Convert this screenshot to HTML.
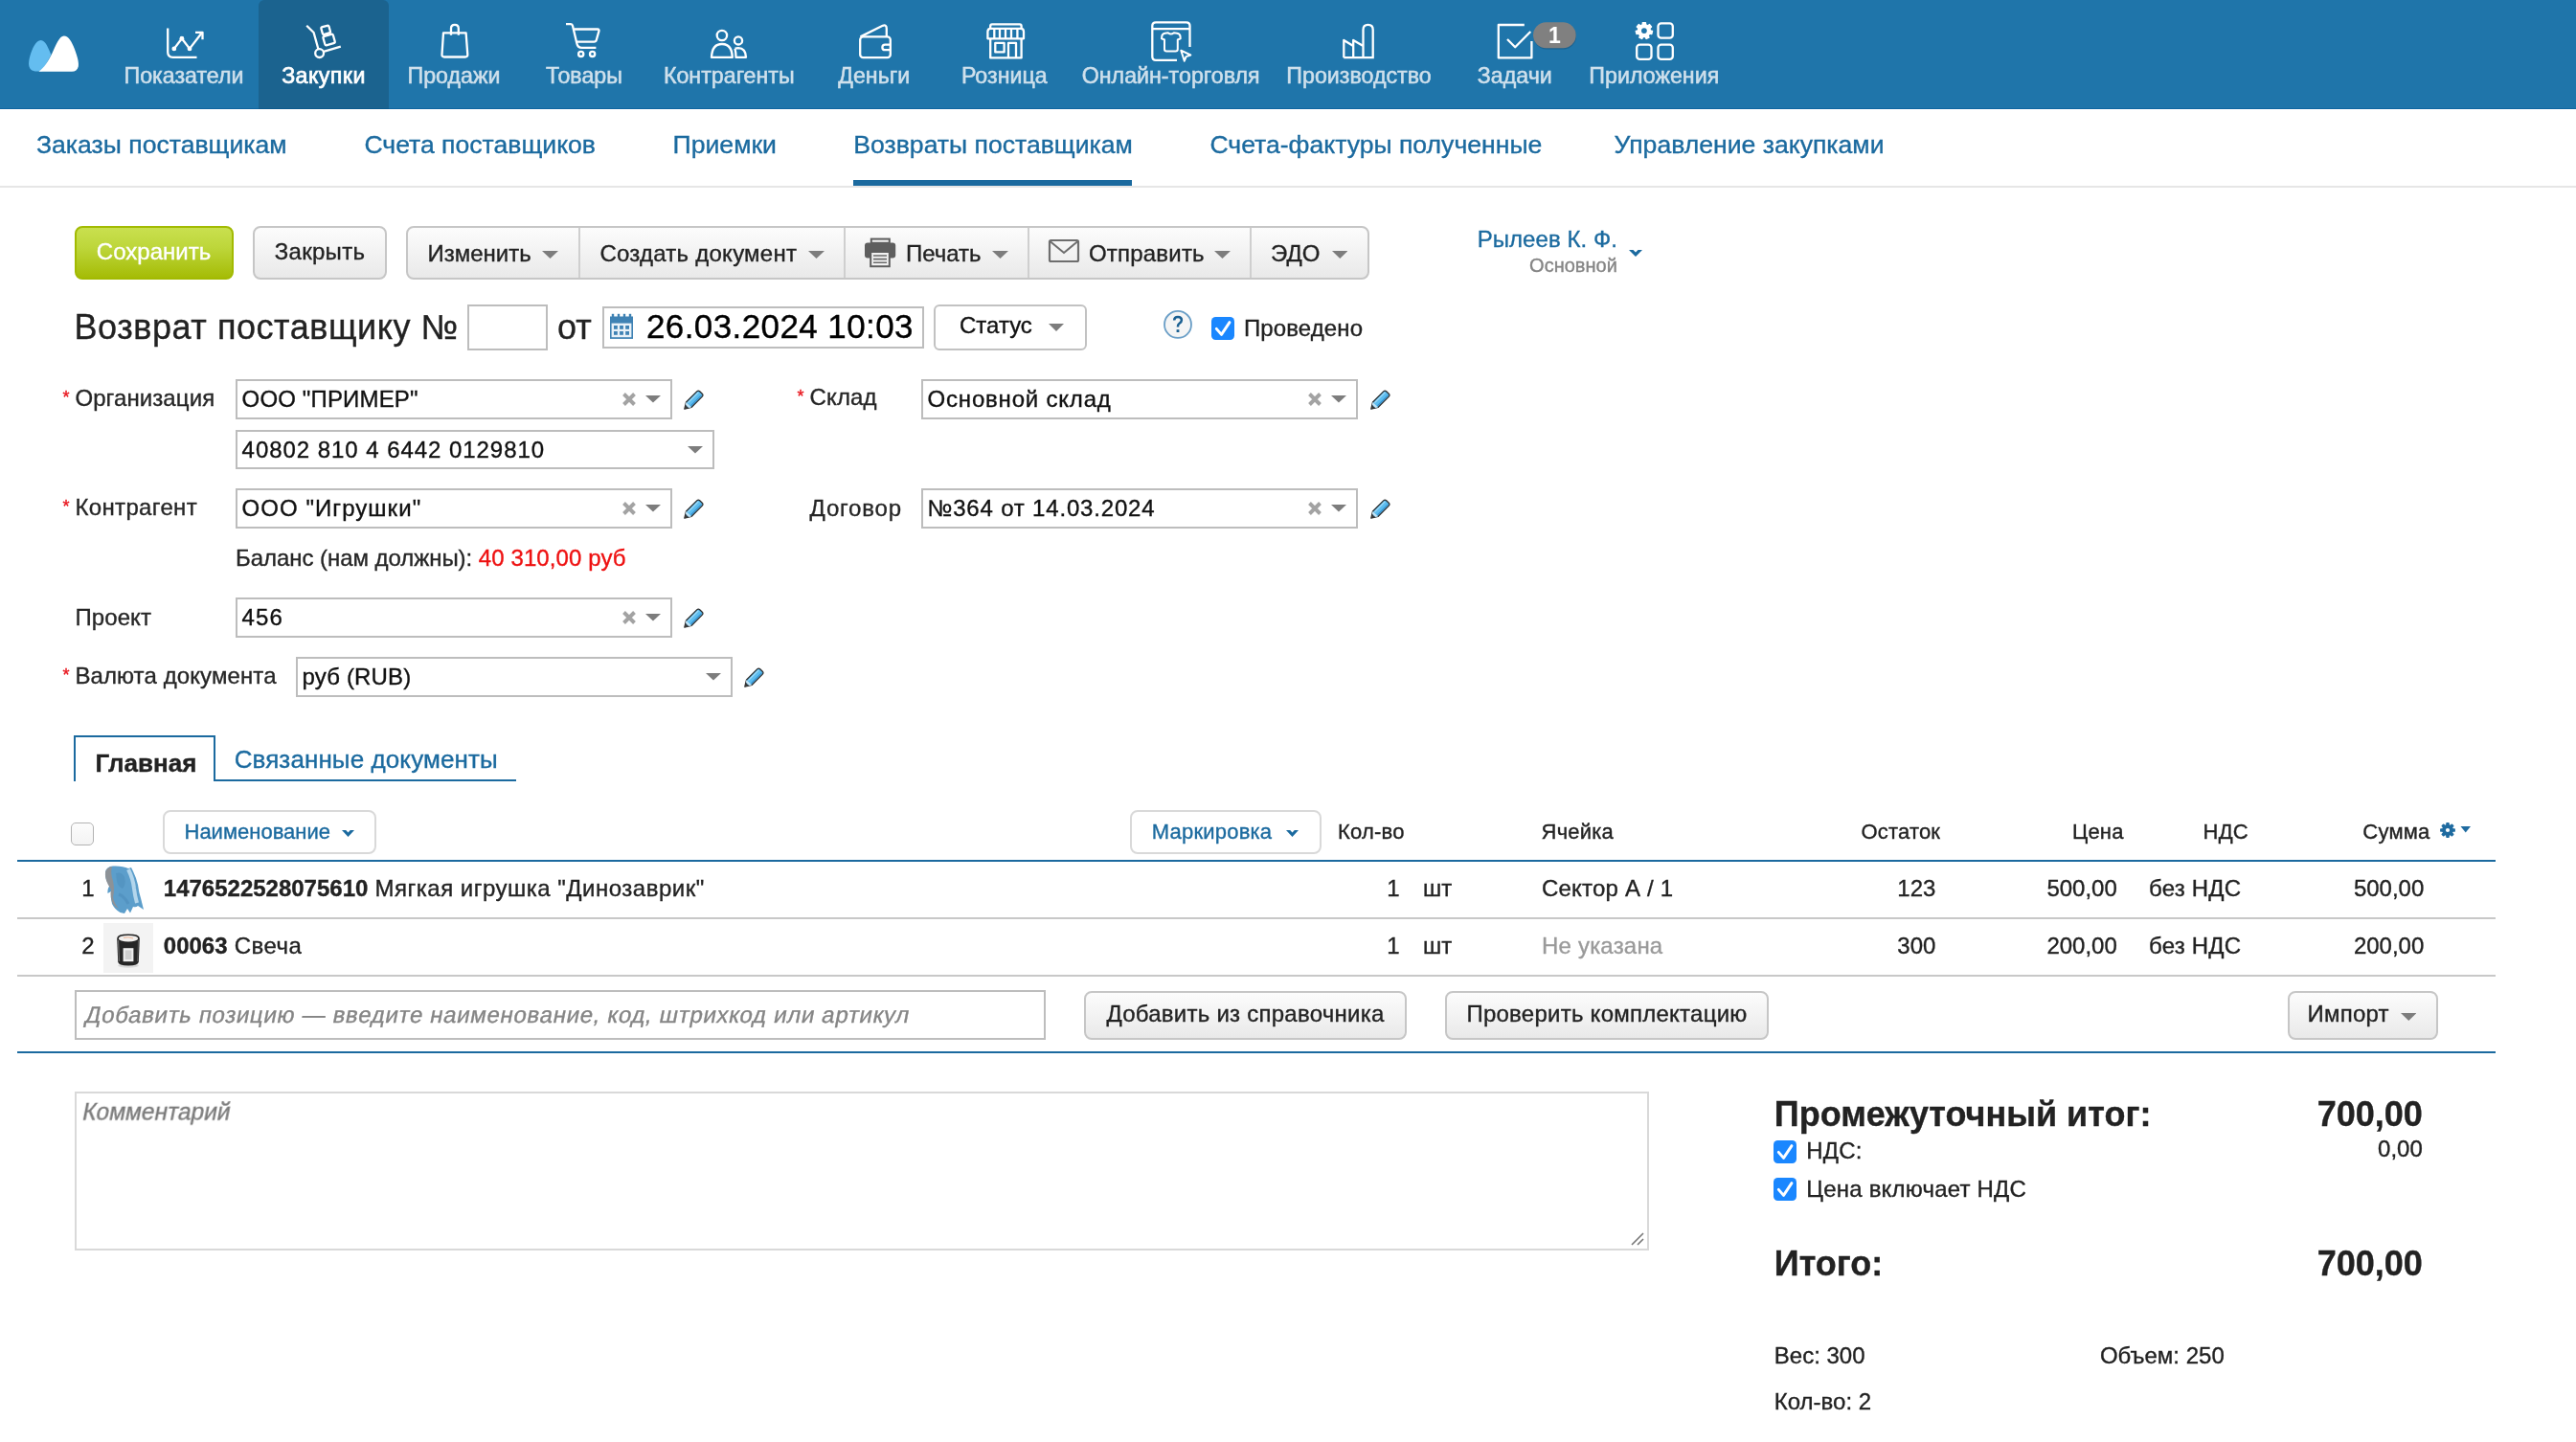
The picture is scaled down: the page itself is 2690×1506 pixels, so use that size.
<!DOCTYPE html>
<html><head><meta charset="utf-8"><style>
html,body{margin:0;padding:0;background:#fff;width:2690px;height:1506px;overflow:hidden;position:relative;}
.t{position:absolute;white-space:nowrap;font-family:"Liberation Sans", sans-serif;line-height:1;-webkit-text-stroke:0.35px currentColor;}
#w{position:absolute;left:0;top:0;width:2690px;height:1506px;will-change:transform;}
.r{position:absolute;box-sizing:border-box;}
</style></head><body>
<div id="w">
<div class="r" style="left:0px;top:0px;width:2690px;height:114px;background:#1f75aa;"></div>
<div class="r" style="left:0px;top:113px;width:2690px;height:1px;background:#0f65a0;"></div>
<div class="r" style="left:270px;top:0px;width:136px;height:114px;background:#1b638f;border-radius:6px 6px 0 0;"></div>
<div class="r" style="left:270px;top:113px;width:136px;height:1px;background:#0c5a8e;"></div>
<div class="t" style="top:68.0px;font-size:23.2px;color:#cfe0ec;letter-spacing:0.02px;left:192px;transform:translateX(-50%);-webkit-text-stroke:0.5px currentColor;">Показатели</div>
<div class="t" style="top:68.0px;font-size:23.2px;color:#ffffff;letter-spacing:0.45px;left:338px;transform:translateX(-50%);-webkit-text-stroke:0.7px #fff;">Закупки</div>
<div class="t" style="top:68.0px;font-size:23.2px;color:#cfe0ec;letter-spacing:0.02px;left:474px;transform:translateX(-50%);-webkit-text-stroke:0.5px currentColor;">Продажи</div>
<div class="t" style="top:68.0px;font-size:23.2px;color:#cfe0ec;letter-spacing:0.02px;left:610px;transform:translateX(-50%);-webkit-text-stroke:0.5px currentColor;">Товары</div>
<div class="t" style="top:68.0px;font-size:23.2px;color:#cfe0ec;letter-spacing:0.02px;left:761.3px;transform:translateX(-50%);-webkit-text-stroke:0.5px currentColor;">Контрагенты</div>
<div class="t" style="top:68.0px;font-size:23.2px;color:#cfe0ec;letter-spacing:0.02px;left:912.7px;transform:translateX(-50%);-webkit-text-stroke:0.5px currentColor;">Деньги</div>
<div class="t" style="top:68.0px;font-size:23.2px;color:#cfe0ec;letter-spacing:0.02px;left:1048.8px;transform:translateX(-50%);-webkit-text-stroke:0.5px currentColor;">Розница</div>
<div class="t" style="top:68.0px;font-size:23.2px;color:#cfe0ec;letter-spacing:0.02px;left:1222.7px;transform:translateX(-50%);-webkit-text-stroke:0.5px currentColor;">Онлайн-торговля</div>
<div class="t" style="top:68.0px;font-size:23.2px;color:#cfe0ec;letter-spacing:0.02px;left:1419px;transform:translateX(-50%);-webkit-text-stroke:0.5px currentColor;">Производство</div>
<div class="t" style="top:68.0px;font-size:23.2px;color:#cfe0ec;letter-spacing:0.02px;left:1581.8px;transform:translateX(-50%);-webkit-text-stroke:0.5px currentColor;">Задачи</div>
<div class="t" style="top:68.0px;font-size:23.2px;color:#cfe0ec;letter-spacing:0.02px;left:1727.3px;transform:translateX(-50%);-webkit-text-stroke:0.5px currentColor;">Приложения</div>
<svg class="r" style="left:0;top:0" width="2690" height="114" viewBox="0 0 2690 114">
<g fill="none" stroke="#ffffff" stroke-width="2.3" stroke-linecap="butt" stroke-linejoin="round">
<!-- logo -->
</g>
<path d="M42.7 42 C37.5 42 33.5 51 31.2 59 C29.3 66 29.6 71.5 33.5 73.4 C36 74.6 40 74.7 44 74.4 L53.4 57 C50.5 50.5 47.5 42 42.7 42 Z" fill="#64bdf0"/>
<path d="M40.5 74.7 C46.5 70.5 50.5 63.5 54.5 55.5 C58.5 47 62 37.5 66.8 37.5 C71.5 37.5 75 43.5 78 51.5 C81 59.5 82.6 65.5 81.8 69.5 C81 73 78.5 74.7 75 74.7 Z" fill="#fff"/>
<g fill="none" stroke="#ffffff" stroke-width="2.3" stroke-linejoin="round">
<!-- pokazateli -->
<path d="M175.2 29.5 V54.5 Q175.2 59.8 180.5 59.8 H205.5"/>
<path d="M181.8 50.9 L189.9 40.2 L198 50.9 L211 34"/>
<path d="M204 33.8 H211.5 V41.2"/>
</g><g fill="#fff"><circle cx="181.8" cy="50.9" r="2.4"/><circle cx="189.9" cy="40.2" r="2.4"/><circle cx="198" cy="50.9" r="2.4"/></g>
<g fill="none" stroke="#ffffff" stroke-width="2.3" stroke-linejoin="round">
<!-- zakupki -->
<path d="M320.2 26.8 L327.6 34 L332.4 51.2"/>
<circle cx="333.6" cy="55.6" r="4.4"/>
<path d="M338 53.9 L355.8 48.6"/>
<rect x="336" y="27.4" width="8.4" height="8" rx="1.6" transform="rotate(-16 340 31.4)"/>
<rect x="338.2" y="36.6" width="10.8" height="9.8" rx="1.8" transform="rotate(-16 343.6 41.5)"/>
<!-- prodazhi bag -->
<path d="M463 34.3 H486.6 L488.3 56.8 Q488.5 59.5 485.8 59.5 H464 Q461.3 59.5 461.5 56.8 Z"/>
<path d="M471 36.8 V29.8 Q471 25.9 474.9 25.9 Q478.8 25.9 478.8 29.8 V36.8"/>
<!-- tovary cart -->
<path d="M591 25.2 H596 Q597.6 25.2 598 27 L602.4 45.5 Q603.3 49.8 607.5 49.8 H622.4"/>
<path d="M599.3 30.5 H624 Q626 30.5 625.4 32.6 L622.8 41.8 Q622.3 43.7 620.3 43.7 H602.5"/>
<circle cx="606.7" cy="56.4" r="2.6"/>
<circle cx="618.6" cy="56.4" r="2.6"/>
<!-- kontragenty -->
<circle cx="753.9" cy="37" r="5.2"/>
<path d="M743 59.9 Q743.5 46 753.9 46 Q764.3 46 764.8 59.9 Z"/>
<circle cx="771" cy="42.4" r="4.1"/>
<path d="M767.5 50.8 Q769 50.2 771 50.2 Q778.6 50.4 779 59.9 H768.5 Q768.4 54 767.5 50.8"/>
<!-- dengi wallet -->
<rect x="898.2" y="38.4" width="31.6" height="21.8" rx="3.2"/>
<path d="M898.5 38.4 L921.8 26.8 Q925.8 25.4 925.8 29.8 V38"/>
<path d="M929.8 46.6 H924.2 Q921.4 46.6 921.4 49.4 Q921.4 52.2 924.2 52.2 H929.8"/>
<!-- roznica -->
<path d="M1034.2 29.8 V27.2 Q1034.2 25.4 1036 25.4 H1064.8 Q1066.6 25.4 1066.6 27.2 V29.8"/>
<path d="M1031.4 40.3 V33 Q1031.4 29.9 1034.5 29.9 H1066 Q1069 29.9 1069 33 V40.3 Z"/>
<path d="M1038.3 30 V40 M1044 30 V40 M1050 30 V40 M1056 30 V40 M1062.4 30 V40"/>
<path d="M1034.2 40.4 V60.4 H1066.6 V40.4"/>
<rect x="1039.3" y="44.9" width="9.3" height="9.5"/>
<path d="M1053 60.4 V44.9 H1061 V60.4"/>
<!-- online -->
<path d="M1229 62.8 H1207 Q1203.3 62.8 1203.3 59 V27 Q1203.3 23.3 1207 23.3 H1238.8 Q1242.5 23.3 1242.5 27 V49"/>
<path d="M1203.3 30.2 H1242.5"/>
<path d="M1213.3 37.8 Q1213.5 35.5 1216.5 34.8 L1219.8 34.2 Q1222.8 36.8 1225.8 34.2 L1229.2 34.8 Q1232.3 35.5 1232.5 37.8 L1232.7 40.3 L1229.8 41.5 V51.2 Q1229.8 53.4 1227.6 53.4 H1218.2 Q1216 53.4 1216 51.2 V41.5 L1213 40.3 Z" stroke-width="2"/>
<path d="M1233.3 52.7 L1243.3 57.5 L1238.6 59.1 L1236.8 63.7 Z" stroke-width="2"/>
<!-- proizvodstvo -->
<path d="M1403.3 60.2 H1434.8 M1403.3 60.2 V42 L1413.2 48 V60.2 M1413.2 48 V42 L1423.5 48 V60.2 M1423.5 60.2 V30.9 Q1423.5 25.9 1428.6 25.9 Q1433.7 25.9 1433.7 30.9 V60.2"/>
<!-- zadachi -->
<path d="M1591.8 26 H1564.8 V60.4 H1599.4 V43"/>
<path d="M1574 41 L1582.2 49.2 L1598.3 33"/>
<!-- apps -->
<rect x="1731.5" y="24.3" width="15.3" height="15.3" rx="3.2"/>
<rect x="1709.2" y="46.6" width="15.3" height="15.3" rx="3.2"/>
<rect x="1731.5" y="46.6" width="15.3" height="15.3" rx="3.2"/>
</g>
<!-- gear -->
<g transform="translate(1716.9 32.1)" fill="#fff">
<circle r="7.2"/><rect x="-2.3" y="-9.2" width="4.6" height="4" rx="0.8" transform="rotate(0.0)"/><rect x="-2.3" y="-9.2" width="4.6" height="4" rx="0.8" transform="rotate(51.4)"/><rect x="-2.3" y="-9.2" width="4.6" height="4" rx="0.8" transform="rotate(102.9)"/><rect x="-2.3" y="-9.2" width="4.6" height="4" rx="0.8" transform="rotate(154.3)"/><rect x="-2.3" y="-9.2" width="4.6" height="4" rx="0.8" transform="rotate(205.7)"/><rect x="-2.3" y="-9.2" width="4.6" height="4" rx="0.8" transform="rotate(257.1)"/><rect x="-2.3" y="-9.2" width="4.6" height="4" rx="0.8" transform="rotate(308.6)"/>
<circle r="2.9" fill="#1f75aa"/>
</g>
<!-- badge -->
<rect x="1601.5" y="24.5" width="44.5" height="27" rx="13.5" fill="#184f76" opacity="0.5"/>
<rect x="1601" y="23.3" width="44.7" height="27" rx="13.5" fill="#808080"/>
</svg>
<div class="t" style="top:25.7px;font-size:23px;color:#fff;font-weight:700;left:1623.5px;transform:translateX(-50%);-webkit-text-stroke:0;">1</div>
<div class="r" style="left:0px;top:194px;width:2690px;height:2px;background:#e6e6e6;"></div>
<div class="t" style="top:137.9px;font-size:26.6px;color:#1b6a9f;left:38px;">Заказы поставщикам</div>
<div class="t" style="top:137.9px;font-size:26.6px;color:#1b6a9f;left:380.4px;">Счета поставщиков</div>
<div class="t" style="top:137.9px;font-size:26.6px;color:#1b6a9f;left:702.6px;">Приемки</div>
<div class="t" style="top:137.9px;font-size:26.6px;color:#1b6a9f;left:891.3px;">Возвраты поставщикам</div>
<div class="t" style="top:137.9px;font-size:26.6px;color:#1b6a9f;left:1263.4px;">Счета-фактуры полученные</div>
<div class="t" style="top:137.9px;font-size:26.6px;color:#1b6a9f;left:1685.5px;">Управление закупками</div>
<div class="r" style="left:891.3px;top:188px;width:291.20000000000005px;height:6px;background:#1b6a9f;"></div>
<div class="r" style="left:78px;top:236px;width:166px;height:56px;background:linear-gradient(#c9e04f 0%,#bdd63a 40%,#a5bc06 100%);border:2px solid #a2ba02;border-radius:8px;"></div>
<div class="t" style="top:251.3px;font-size:24px;color:#fff;left:160.5px;transform:translateX(-50%);">Сохранить</div>
<div class="r" style="left:264px;top:236px;width:140px;height:56px;background:linear-gradient(#fcfcfc,#e9e9e9);border:2px solid #c6c6c6;border-radius:8px;"></div>
<div class="t" style="top:251.3px;font-size:24px;color:#222;letter-spacing:0.3px;left:334px;transform:translateX(-50%);">Закрыть</div>
<div class="r" style="left:424px;top:236px;width:1006px;height:56px;background:linear-gradient(#fcfcfc,#e9e9e9);border:2px solid #c6c6c6;border-radius:8px;"></div>
<div class="r" style="left:604px;top:238px;width:2px;height:52px;background:#cfcfcf;"></div>
<div class="r" style="left:881px;top:238px;width:2px;height:52px;background:#cfcfcf;"></div>
<div class="r" style="left:1073px;top:238px;width:2px;height:52px;background:#cfcfcf;"></div>
<div class="r" style="left:1305px;top:238px;width:2px;height:52px;background:#cfcfcf;"></div>
<div class="t" style="top:252.5px;font-size:24px;color:#222;left:446.4px;">Изменить</div>
<svg class="r" style="left:566px;top:262px" width="17" height="8" viewBox="0 0 17 8"><path d="M0 0 H17 L8.5 8 Z" fill="#7d7d7d"/></svg>
<div class="t" style="top:252.5px;font-size:24px;color:#222;letter-spacing:0.25px;left:626.4px;">Создать документ</div>
<svg class="r" style="left:844px;top:262px" width="17" height="8" viewBox="0 0 17 8"><path d="M0 0 H17 L8.5 8 Z" fill="#7d7d7d"/></svg>
<div class="t" style="top:252.5px;font-size:24px;color:#222;left:945.9px;">Печать</div>
<svg class="r" style="left:1036px;top:262px" width="17" height="8" viewBox="0 0 17 8"><path d="M0 0 H17 L8.5 8 Z" fill="#7d7d7d"/></svg>
<div class="t" style="top:252.5px;font-size:24px;color:#222;letter-spacing:0.2px;left:1137px;">Отправить</div>
<svg class="r" style="left:1268px;top:262px" width="17" height="8" viewBox="0 0 17 8"><path d="M0 0 H17 L8.5 8 Z" fill="#7d7d7d"/></svg>
<div class="t" style="top:252.5px;font-size:24px;color:#222;left:1327px;">ЭДО</div>
<svg class="r" style="left:1390.5px;top:262px" width="16.5" height="8" viewBox="0 0 16.5 8"><path d="M0 0 H16.5 L8.25 8 Z" fill="#7d7d7d"/></svg>
<svg class="r" style="left:900px;top:246px" width="40" height="36" viewBox="900 246 40 36">
<rect x="909.8" y="249.6" width="19" height="4.2" fill="#f0f0f0" stroke="#5e5e5e" stroke-width="2"/>
<path d="M906 253.5 H932.2 Q935.2 253.5 935.2 256.5 V266.5 Q935.2 269.4 932.2 269.4 H906 Q903 269.4 903 266.5 V256.5 Q903 253.5 906 253.5 Z" fill="#5e5e5e"/>
<rect x="909.2" y="263" width="19.6" height="15.2" fill="#f2f2f2" stroke="#5e5e5e" stroke-width="2"/>
<path d="M912 267 H926 M912 270.6 H926 M912 274.2 H926" stroke="#6a6a6a" stroke-width="1.6"/>
</svg>
<svg class="r" style="left:1092px;top:247px" width="38" height="30" viewBox="1092 247 38 30">
<rect x="1096" y="251" width="30" height="22" rx="1.5" fill="none" stroke="#6e6e6e" stroke-width="2.2"/>
<path d="M1096.5 252 L1111 264 L1125.5 252" fill="none" stroke="#6e6e6e" stroke-width="2"/>
</svg>
<div class="t" style="top:237.7px;font-size:24px;color:#1b6a9f;letter-spacing:0.05px;left:1542.7px;">Рылеев К. Ф.</div>
<div class="t" style="top:267.1px;font-size:20px;color:#858585;right:1001.2px;">Основной</div>
<svg class="r" style="left:1701px;top:261px" width="14" height="8" viewBox="0 0 14 8"><path d="M0 0 H4.5 L7 2.6 L9.5 0 H14 L7 7 Z" fill="#1b6a9f"/></svg>
<div class="t" style="top:323.5px;font-size:36px;color:#222;letter-spacing:0.55px;left:77.5px;">Возврат поставщику №</div>
<div class="r" style="left:488px;top:318px;width:84px;height:48px;border:2px solid #bdbdbd;background:#fff;"></div>
<div class="t" style="top:323.5px;font-size:36px;color:#222;left:582px;">от</div>
<div class="r" style="left:629px;top:320px;width:336px;height:44px;border:2px solid #bdbdbd;background:#fff;"></div>
<svg class="r" style="left:636px;top:327px" width="26" height="28" viewBox="636 327 26 28">
<rect x="637" y="330.5" width="24" height="23.4" fill="#3f82b4"/>
<rect x="638.8" y="327.8" width="2.4" height="4" fill="#3f82b4"/><rect x="644.8" y="327.8" width="2.4" height="4" fill="#3f82b4"/>
<rect x="650.8" y="327.8" width="2.4" height="4" fill="#3f82b4"/><rect x="656.8" y="327.8" width="2.4" height="4" fill="#3f82b4"/>
<rect x="638.6" y="337.6" width="20.8" height="14.6" fill="#e8f1f8"/>
<g fill="#3f82b4"><rect x="641" y="340" width="3.8" height="3.8"/><rect x="647.1" y="340" width="3.8" height="3.8"/><rect x="653.2" y="340" width="3.8" height="3.8"/>
<rect x="641" y="346" width="3.8" height="3.8"/><rect x="647.1" y="346" width="3.8" height="3.8"/><rect x="653.2" y="346" width="3.8" height="3.8"/></g>
</svg>
<div class="t" style="top:322.8px;font-size:35px;color:#000;letter-spacing:0.4px;left:675px;">26.03.2024 10:03</div>
<div class="r" style="left:975px;top:318px;width:160px;height:48px;border:2px solid #c2c2c2;border-radius:6px;background:#fff;"></div>
<div class="t" style="top:327.7px;font-size:24px;color:#111;left:1002px;">Статус</div>
<svg class="r" style="left:1095px;top:337.5px" width="16" height="8.0" viewBox="0 0 16 8.0"><path d="M0 0 H16 L8.0 8.0 Z" fill="#7d7d7d"/></svg>
<svg class="r" style="left:1212px;top:321px" width="36" height="36" viewBox="1212 321 36 36">
<circle cx="1230" cy="338.9" r="14" fill="#f5f5f5" stroke="#6b9fc7" stroke-width="1.8"/>
<path d="M1226.2 334.6 Q1226.2 331 1230 331 Q1233.9 331 1233.9 334.3 Q1233.9 336.4 1231.6 337.8 Q1230 338.8 1230 340.8 V341.6" fill="none" stroke="#1a5f91" stroke-width="2.5"/>
<rect x="1228.6" y="344.2" width="2.8" height="2.8" fill="#1a5f91"/>
</svg>
<svg class="r" style="left:1265px;top:331px" width="24" height="24" viewBox="0 0 24 24">
<rect x="0" y="0" width="24" height="24" rx="4.5" fill="#1a87ff"/>
<path d="M5.3 12.4 L10.5 18.4 L19 5.6" fill="none" stroke="#fff" stroke-width="2.9" stroke-linecap="round" stroke-linejoin="round"/>
</svg>
<div class="t" style="top:330.9px;font-size:24px;color:#222;letter-spacing:0.1px;left:1299px;">Проведено</div>
<div class="t" style="top:403.7px;font-size:24px;color:#262626;letter-spacing:0.1px;left:78.4px;">Организация</div>
<div class="t" style="top:405.6px;font-size:18px;color:#e8141c;left:65.4px;">*</div>
<div class="r" style="left:246px;top:396px;width:456px;height:42px;border:2px solid #bdbdbd;background:#fff;"></div>
<div class="t" style="top:405.2px;font-size:24px;color:#111;letter-spacing:0.15px;left:252.6px;">ООО "ПРИМЕР"</div>
<svg class="r" style="left:650px;top:410px" width="14" height="14" viewBox="0 0 14 14"><path d="M1.5 1.5 L12.5 12.5 M12.5 1.5 L1.5 12.5" stroke="#a3a3a3" stroke-width="3.9"/></svg>
<svg class="r" style="left:674px;top:413px" width="16" height="7.600000000000023" viewBox="0 0 16 7.600000000000023"><path d="M0 0 H16 L8.0 7.600000000000023 Z" fill="#7d7d7d"/></svg>
<svg class="r" style="left:711px;top:404.5px" width="26" height="26" viewBox="-2 -2 26 26">
<g transform="translate(1.8 20.2) rotate(-45) scale(0.9)">
<path d="M0 0 L7 -4.3 H24.5 Q27 -4.3 27 -2 V2 Q27 4.3 24.5 4.3 H7 Z" fill="#5cbdf0" stroke="#303030" stroke-width="1.4" stroke-linejoin="round"/>
<path d="M0 0 L4.2 -2.6 V2.6 Z" fill="#3a3a3a"/>
<path d="M7 -4.3 L4.5 -2.8 V2.8 L7 4.3 Z" fill="#c4e3f5"/>
<path d="M8 -2.2 H25" stroke="#a9dcf6" stroke-width="1.3"/>
<path d="M8 2.6 H25.5" stroke="#3890cc" stroke-width="1.4"/>
</g>
</svg>
<div class="r" style="left:246px;top:449px;width:500px;height:41px;border:2px solid #bdbdbd;background:#fff;"></div>
<div class="t" style="top:457.5px;font-size:24px;color:#111;letter-spacing:0.95px;left:252.6px;">40802 810 4 6442 0129810</div>
<svg class="r" style="left:718px;top:466px" width="16" height="7.600000000000023" viewBox="0 0 16 7.600000000000023"><path d="M0 0 H16 L8.0 7.600000000000023 Z" fill="#7d7d7d"/></svg>
<div class="t" style="top:518.2px;font-size:24px;color:#262626;letter-spacing:0.36px;left:78.4px;">Контрагент</div>
<div class="t" style="top:520.1px;font-size:18px;color:#e8141c;left:65.4px;">*</div>
<div class="r" style="left:246px;top:510px;width:456px;height:42px;border:2px solid #bdbdbd;background:#fff;"></div>
<div class="t" style="top:519.2px;font-size:24px;color:#111;letter-spacing:1.05px;left:252.6px;">ООО "Игрушки"</div>
<svg class="r" style="left:650px;top:524px" width="14" height="14" viewBox="0 0 14 14"><path d="M1.5 1.5 L12.5 12.5 M12.5 1.5 L1.5 12.5" stroke="#a3a3a3" stroke-width="3.9"/></svg>
<svg class="r" style="left:674px;top:527px" width="16" height="7.600000000000023" viewBox="0 0 16 7.600000000000023"><path d="M0 0 H16 L8.0 7.600000000000023 Z" fill="#7d7d7d"/></svg>
<svg class="r" style="left:711px;top:518.5px" width="26" height="26" viewBox="-2 -2 26 26">
<g transform="translate(1.8 20.2) rotate(-45) scale(0.9)">
<path d="M0 0 L7 -4.3 H24.5 Q27 -4.3 27 -2 V2 Q27 4.3 24.5 4.3 H7 Z" fill="#5cbdf0" stroke="#303030" stroke-width="1.4" stroke-linejoin="round"/>
<path d="M0 0 L4.2 -2.6 V2.6 Z" fill="#3a3a3a"/>
<path d="M7 -4.3 L4.5 -2.8 V2.8 L7 4.3 Z" fill="#c4e3f5"/>
<path d="M8 -2.2 H25" stroke="#a9dcf6" stroke-width="1.3"/>
<path d="M8 2.6 H25.5" stroke="#3890cc" stroke-width="1.4"/>
</g>
</svg>
<div class="t" style="top:570.7px;font-size:24px;color:#262626;letter-spacing:-0.05px;left:246px;">Баланс (нам должны):</div>
<div class="t" style="top:570.7px;font-size:24px;color:#ee1111;letter-spacing:0.1px;left:499.8px;">40 310,00 руб</div>
<div class="t" style="top:632.5px;font-size:24px;color:#262626;letter-spacing:0.1px;left:78.4px;">Проект</div>
<div class="r" style="left:246px;top:624px;width:456px;height:42px;border:2px solid #bdbdbd;background:#fff;"></div>
<div class="t" style="top:633.2px;font-size:24px;color:#111;letter-spacing:1.1px;left:252.6px;">456</div>
<svg class="r" style="left:650px;top:638px" width="14" height="14" viewBox="0 0 14 14"><path d="M1.5 1.5 L12.5 12.5 M12.5 1.5 L1.5 12.5" stroke="#a3a3a3" stroke-width="3.9"/></svg>
<svg class="r" style="left:674px;top:641px" width="16" height="7.600000000000023" viewBox="0 0 16 7.600000000000023"><path d="M0 0 H16 L8.0 7.600000000000023 Z" fill="#7d7d7d"/></svg>
<svg class="r" style="left:711px;top:632.5px" width="26" height="26" viewBox="-2 -2 26 26">
<g transform="translate(1.8 20.2) rotate(-45) scale(0.9)">
<path d="M0 0 L7 -4.3 H24.5 Q27 -4.3 27 -2 V2 Q27 4.3 24.5 4.3 H7 Z" fill="#5cbdf0" stroke="#303030" stroke-width="1.4" stroke-linejoin="round"/>
<path d="M0 0 L4.2 -2.6 V2.6 Z" fill="#3a3a3a"/>
<path d="M7 -4.3 L4.5 -2.8 V2.8 L7 4.3 Z" fill="#c4e3f5"/>
<path d="M8 -2.2 H25" stroke="#a9dcf6" stroke-width="1.3"/>
<path d="M8 2.6 H25.5" stroke="#3890cc" stroke-width="1.4"/>
</g>
</svg>
<div class="t" style="top:694.4px;font-size:24px;color:#262626;letter-spacing:0.1px;left:78.4px;">Валюта документа</div>
<div class="t" style="top:696.3px;font-size:18px;color:#e8141c;left:65.4px;">*</div>
<div class="r" style="left:309px;top:686px;width:456px;height:42px;border:2px solid #bdbdbd;background:#fff;"></div>
<div class="t" style="top:695.2px;font-size:24px;color:#111;letter-spacing:0.15px;left:315.6px;">руб (RUB)</div>
<svg class="r" style="left:737px;top:703px" width="16" height="7.600000000000023" viewBox="0 0 16 7.600000000000023"><path d="M0 0 H16 L8.0 7.600000000000023 Z" fill="#7d7d7d"/></svg>
<svg class="r" style="left:774px;top:694.5px" width="26" height="26" viewBox="-2 -2 26 26">
<g transform="translate(1.8 20.2) rotate(-45) scale(0.9)">
<path d="M0 0 L7 -4.3 H24.5 Q27 -4.3 27 -2 V2 Q27 4.3 24.5 4.3 H7 Z" fill="#5cbdf0" stroke="#303030" stroke-width="1.4" stroke-linejoin="round"/>
<path d="M0 0 L4.2 -2.6 V2.6 Z" fill="#3a3a3a"/>
<path d="M7 -4.3 L4.5 -2.8 V2.8 L7 4.3 Z" fill="#c4e3f5"/>
<path d="M8 -2.2 H25" stroke="#a9dcf6" stroke-width="1.3"/>
<path d="M8 2.6 H25.5" stroke="#3890cc" stroke-width="1.4"/>
</g>
</svg>
<div class="t" style="top:403.3px;font-size:24px;color:#262626;letter-spacing:0.1px;left:845.6px;">Склад</div>
<div class="t" style="top:405.2px;font-size:18px;color:#e8141c;left:832.6px;">*</div>
<div class="r" style="left:962px;top:396px;width:456px;height:42px;border:2px solid #bdbdbd;background:#fff;"></div>
<div class="t" style="top:405.2px;font-size:24px;color:#111;letter-spacing:0.8px;left:968.6px;">Основной склад</div>
<svg class="r" style="left:1366px;top:410px" width="14" height="14" viewBox="0 0 14 14"><path d="M1.5 1.5 L12.5 12.5 M12.5 1.5 L1.5 12.5" stroke="#a3a3a3" stroke-width="3.9"/></svg>
<svg class="r" style="left:1390px;top:413px" width="16" height="7.600000000000023" viewBox="0 0 16 7.600000000000023"><path d="M0 0 H16 L8.0 7.600000000000023 Z" fill="#7d7d7d"/></svg>
<svg class="r" style="left:1427.5px;top:404.5px" width="26" height="26" viewBox="-2 -2 26 26">
<g transform="translate(1.8 20.2) rotate(-45) scale(0.9)">
<path d="M0 0 L7 -4.3 H24.5 Q27 -4.3 27 -2 V2 Q27 4.3 24.5 4.3 H7 Z" fill="#5cbdf0" stroke="#303030" stroke-width="1.4" stroke-linejoin="round"/>
<path d="M0 0 L4.2 -2.6 V2.6 Z" fill="#3a3a3a"/>
<path d="M7 -4.3 L4.5 -2.8 V2.8 L7 4.3 Z" fill="#c4e3f5"/>
<path d="M8 -2.2 H25" stroke="#a9dcf6" stroke-width="1.3"/>
<path d="M8 2.6 H25.5" stroke="#3890cc" stroke-width="1.4"/>
</g>
</svg>
<div class="t" style="top:518.6px;font-size:24px;color:#262626;letter-spacing:0.8px;left:845.6px;">Договор</div>
<div class="r" style="left:962px;top:510px;width:456px;height:42px;border:2px solid #bdbdbd;background:#fff;"></div>
<div class="t" style="top:519.2px;font-size:24px;color:#111;letter-spacing:0.82px;left:968.6px;">№364 от 14.03.2024</div>
<svg class="r" style="left:1366px;top:524px" width="14" height="14" viewBox="0 0 14 14"><path d="M1.5 1.5 L12.5 12.5 M12.5 1.5 L1.5 12.5" stroke="#a3a3a3" stroke-width="3.9"/></svg>
<svg class="r" style="left:1390px;top:527px" width="16" height="7.600000000000023" viewBox="0 0 16 7.600000000000023"><path d="M0 0 H16 L8.0 7.600000000000023 Z" fill="#7d7d7d"/></svg>
<svg class="r" style="left:1427.5px;top:518.5px" width="26" height="26" viewBox="-2 -2 26 26">
<g transform="translate(1.8 20.2) rotate(-45) scale(0.9)">
<path d="M0 0 L7 -4.3 H24.5 Q27 -4.3 27 -2 V2 Q27 4.3 24.5 4.3 H7 Z" fill="#5cbdf0" stroke="#303030" stroke-width="1.4" stroke-linejoin="round"/>
<path d="M0 0 L4.2 -2.6 V2.6 Z" fill="#3a3a3a"/>
<path d="M7 -4.3 L4.5 -2.8 V2.8 L7 4.3 Z" fill="#c4e3f5"/>
<path d="M8 -2.2 H25" stroke="#a9dcf6" stroke-width="1.3"/>
<path d="M8 2.6 H25.5" stroke="#3890cc" stroke-width="1.4"/>
</g>
</svg>
<div class="r" style="left:77px;top:768px;width:148px;height:48px;border:2px solid #1b6a9f;border-bottom:none;background:#fff;"></div>
<div class="r" style="left:223px;top:814px;width:316px;height:2px;background:#1b6a9f;"></div>
<div class="t" style="top:784.0px;font-size:26px;color:#222;font-weight:700;left:99.6px;">Главная</div>
<div class="t" style="top:780.3px;font-size:26px;color:#1b6a9f;letter-spacing:0.1px;left:244.7px;">Связанные документы</div>
<div class="r" style="left:74px;top:859px;width:24px;height:24px;border:1.3px solid #b3b3b3;border-radius:5px;background:linear-gradient(#fcfcfc,#f3f3f3);"></div>
<div class="r" style="left:170px;top:846px;width:223px;height:46px;border:2px solid #d9d9d9;border-radius:8px;background:#fff;"></div>
<div class="t" style="top:858.0px;font-size:22px;color:#1b6a9f;left:192.5px;">Наименование</div>
<svg class="r" style="left:357px;top:867px" width="13" height="7" viewBox="0 0 13 7"><path d="M0 0 H4.2 L6.5 2.4 L8.8 0 H13 L6.5 7 Z" fill="#1b6a9f"/></svg>
<div class="r" style="left:1180px;top:846px;width:200px;height:46px;border:2px solid #d9d9d9;border-radius:8px;background:#fff;"></div>
<div class="t" style="top:858.0px;font-size:22px;color:#1b6a9f;letter-spacing:0.2px;left:1202.8px;">Маркировка</div>
<svg class="r" style="left:1343px;top:867px" width="13" height="7" viewBox="0 0 13 7"><path d="M0 0 H4.2 L6.5 2.4 L8.8 0 H13 L6.5 7 Z" fill="#1b6a9f"/></svg>
<div class="t" style="top:858.0px;font-size:22px;color:#222;letter-spacing:0.2px;left:1397px;">Кол-во</div>
<div class="t" style="top:858.0px;font-size:22px;color:#222;letter-spacing:0.2px;left:1609.6px;">Ячейка</div>
<div class="t" style="top:858.0px;font-size:22px;color:#222;letter-spacing:0.2px;left:1943.4px;">Остаток</div>
<div class="t" style="top:858.0px;font-size:22px;color:#222;letter-spacing:0.2px;right:472.4000000000001px;">Цена</div>
<div class="t" style="top:858.0px;font-size:22px;color:#222;letter-spacing:0.2px;left:2300.6px;">НДС</div>
<div class="t" style="top:858.0px;font-size:22px;color:#222;letter-spacing:0.2px;right:152.5px;">Сумма</div>
<svg class="r" style="left:2545px;top:856px" width="40" height="22" viewBox="2545 856 40 22">
<g transform="translate(2556 867)" fill="#1f6ba0"><circle r="5.9"/><rect x="-1.8" y="-7.9" width="3.6" height="3.6" rx="0.9" transform="rotate(0)"/><rect x="-1.8" y="-7.9" width="3.6" height="3.6" rx="0.9" transform="rotate(45)"/><rect x="-1.8" y="-7.9" width="3.6" height="3.6" rx="0.9" transform="rotate(90)"/><rect x="-1.8" y="-7.9" width="3.6" height="3.6" rx="0.9" transform="rotate(135)"/><rect x="-1.8" y="-7.9" width="3.6" height="3.6" rx="0.9" transform="rotate(180)"/><rect x="-1.8" y="-7.9" width="3.6" height="3.6" rx="0.9" transform="rotate(225)"/><rect x="-1.8" y="-7.9" width="3.6" height="3.6" rx="0.9" transform="rotate(270)"/><rect x="-1.8" y="-7.9" width="3.6" height="3.6" rx="0.9" transform="rotate(315)"/>
<circle r="2.1" fill="#fff"/></g>
<path d="M2569.5 863 H2580 L2574.75 869.5 Z" fill="#1f6ba0"/>
</svg>
<div class="r" style="left:18px;top:898px;width:2588px;height:2px;background:#1b6a9f;"></div>
<div class="r" style="left:18px;top:958px;width:2588px;height:2px;background:#c8c8c8;"></div>
<div class="r" style="left:18px;top:1018px;width:2588px;height:2px;background:#c8c8c8;"></div>
<div class="r" style="left:18px;top:1098px;width:2588px;height:2px;background:#1b6a9f;"></div>
<div class="t" style="top:916.2px;font-size:24px;color:#222;letter-spacing:-1px;right:2592.5px;">1</div>
<div class="t" style="left:170.8px;top:916.2px;font-size:24px;color:#222"><b>1476522528075610</b><span style="letter-spacing:0.5px"> Мягкая игрушка "Динозаврик"</span></div>
<div class="t" style="top:916.2px;font-size:24px;color:#222;right:1228.5px;">1</div>
<div class="t" style="top:916.2px;font-size:24px;color:#222;left:1486px;">шт</div>
<div class="t" style="top:916.2px;font-size:24px;color:#222;letter-spacing:0.2px;left:1610px;">Сектор А / 1</div>
<div class="t" style="top:916.2px;font-size:24px;color:#222;right:668.5999999999999px;">123</div>
<div class="t" style="top:916.2px;font-size:24px;color:#222;right:479.1999999999998px;">500,00</div>
<div class="t" style="top:916.2px;font-size:24px;color:#222;letter-spacing:0.2px;left:2244px;">без НДС</div>
<div class="t" style="top:916.2px;font-size:24px;color:#222;right:158.69999999999982px;">500,00</div>
<div class="t" style="top:975.7px;font-size:24px;color:#222;letter-spacing:-1px;right:2592.5px;">2</div>
<div class="t" style="left:170.8px;top:975.7px;font-size:24px;color:#222"><b>00063</b><span style="letter-spacing:0.5px"> Свеча</span></div>
<div class="t" style="top:975.7px;font-size:24px;color:#222;right:1228.5px;">1</div>
<div class="t" style="top:975.7px;font-size:24px;color:#222;left:1486px;">шт</div>
<div class="t" style="top:975.7px;font-size:24px;color:#9a9a9a;letter-spacing:0.2px;left:1610px;">Не указана</div>
<div class="t" style="top:975.7px;font-size:24px;color:#222;right:668.5999999999999px;">300</div>
<div class="t" style="top:975.7px;font-size:24px;color:#222;right:479.1999999999998px;">200,00</div>
<div class="t" style="top:975.7px;font-size:24px;color:#222;letter-spacing:0.2px;left:2244px;">без НДС</div>
<div class="t" style="top:975.7px;font-size:24px;color:#222;right:158.69999999999982px;">200,00</div>
<svg class="r" style="left:104px;top:900px" width="50" height="58" viewBox="104 900 50 58">
<path d="M110 911 Q111 905 118 904.5 Q128 904 134 907 L137 906 L139 910 Q142 916 144 924 Q145 932 147 938 L150 950 L144 946 Q142 948 139 947 L136 953.5 L133 949 L130 954 L125.5 953 Q120 950 117 944 Q115 937 116 931 L112.5 933 Q112 928 114.5 925 Q109 917 110 911 Z" fill="#5c9ecb"/>
<path d="M110 911 Q111 906 117 905 Q115 912 118 920 Q120 930 118 937 Q119 943 124 949 Q117 946 116 938 Q115 933 116 929 Q109 919 110 911Z" fill="#8d9297"/>
<path d="M134 908 Q139 918 140 928 Q141 936 143 943" fill="none" stroke="#b4d6ec" stroke-width="4"/>
<path d="M121 912 Q127 910 130 916 Q132 924 128 928 Q123 926 122 920Z" fill="#4f8fbd" opacity="0.6"/>
<path d="M124 934 Q130 936 134 944" fill="none" stroke="#4d8cbb" stroke-width="3" opacity="0.6"/>
</svg>
<div class="r" style="left:108px;top:964px;width:52px;height:52px;background:#f3f3f3;"></div>
<svg class="r" style="left:118px;top:970px" width="32" height="42" viewBox="118 970 32 42">
<ellipse cx="134" cy="1008.5" rx="11" ry="2.2" fill="#d9d9d9"/>
<path d="M122.2 980 Q122.2 975.6 134 975.6 Q145.8 975.6 145.8 980 L144.8 1004.5 Q144.5 1008.4 134 1008.4 Q123.6 1008.4 123.2 1004.5 Z" fill="#262626"/>
<path d="M123.5 982 L124.5 1004" stroke="#6a6a6a" stroke-width="1.2"/>
<path d="M144.5 982 L143.6 1004" stroke="#555" stroke-width="1"/>
<ellipse cx="134" cy="980.2" rx="10.2" ry="3.3" fill="#f2f0ee"/>
<path d="M129 979.5 Q134 978 139 980" stroke="#f0b89a" stroke-width="1" fill="none"/>
<rect x="128.6" y="990.2" width="10.8" height="14" fill="#f0f0f0"/>
<rect x="130.6" y="992.4" width="6.8" height="9.6" fill="#cfcfcf"/>
</svg>
<div class="r" style="left:78px;top:1034px;width:1014px;height:52px;border:2px solid #bdbdbd;background:#fff;"></div>
<div class="t" style="top:1048.3px;font-size:24px;color:#858585;letter-spacing:0.68px;left:87px;transform:skewX(-11deg);transform-origin:0 100%;">Добавить позицию — введите наименование, код, штрихкод или артикул</div>
<div class="r" style="left:1132px;top:1035px;width:337px;height:51px;background:linear-gradient(#fcfcfc,#e9e9e9);border:2px solid #c6c6c6;border-radius:8px;"></div>
<div class="t" style="top:1047.3px;font-size:24px;color:#222;letter-spacing:0.25px;left:1300.5px;transform:translateX(-50%);">Добавить из справочника</div>
<div class="r" style="left:1509px;top:1035px;width:338px;height:51px;background:linear-gradient(#fcfcfc,#e9e9e9);border:2px solid #c6c6c6;border-radius:8px;"></div>
<div class="t" style="top:1047.3px;font-size:24px;color:#222;letter-spacing:0.25px;left:1678px;transform:translateX(-50%);">Проверить комплектацию</div>
<div class="r" style="left:2388.5px;top:1035px;width:157.5px;height:51px;background:linear-gradient(#fcfcfc,#e9e9e9);border:2px solid #c6c6c6;border-radius:8px;"></div>
<div class="t" style="top:1047.3px;font-size:24px;color:#222;letter-spacing:0.2px;left:2409.6px;">Импорт</div>
<svg class="r" style="left:2506.5px;top:1058px" width="16.5" height="8" viewBox="0 0 16.5 8"><path d="M0 0 H16.5 L8.25 8 Z" fill="#7d7d7d"/></svg>
<div class="r" style="left:78px;top:1140px;width:1644px;height:166px;border:2px solid #d9d9d9;background:#fff;"></div>
<div class="t" style="top:1149.5px;font-size:24.5px;color:#7a7a7a;left:84px;transform:skewX(-11deg);transform-origin:0 100%;">Комментарий</div>
<svg class="r" style="left:1700px;top:1284px" width="18" height="18" viewBox="0 0 18 18"><path d="M4 16 L16 4 M10 16 L16 10" stroke="#777" stroke-width="1.6"/></svg>
<div class="t" style="top:1146.3px;font-size:36px;color:#222;font-weight:700;left:1852.8px;">Промежуточный итог:</div>
<div class="t" style="top:1146.3px;font-size:36px;color:#222;font-weight:700;right:160.19999999999982px;">700,00</div>
<svg class="r" style="left:1852px;top:1190.5px" width="24" height="24" viewBox="0 0 24 24">
<rect x="0" y="0" width="24" height="24" rx="4.5" fill="#1a87ff"/>
<path d="M5.3 12.4 L10.5 18.4 L19 5.6" fill="none" stroke="#fff" stroke-width="2.9" stroke-linecap="round" stroke-linejoin="round"/>
</svg>
<div class="t" style="top:1189.7px;font-size:24px;color:#222;letter-spacing:0.2px;left:1886.3px;">НДС:</div>
<div class="t" style="top:1188.2px;font-size:24px;color:#222;right:160.19999999999982px;">0,00</div>
<svg class="r" style="left:1852px;top:1230px" width="24" height="24" viewBox="0 0 24 24">
<rect x="0" y="0" width="24" height="24" rx="4.5" fill="#1a87ff"/>
<path d="M5.3 12.4 L10.5 18.4 L19 5.6" fill="none" stroke="#fff" stroke-width="2.9" stroke-linecap="round" stroke-linejoin="round"/>
</svg>
<div class="t" style="top:1229.5px;font-size:24px;color:#222;letter-spacing:0.2px;left:1886.3px;">Цена включает НДС</div>
<div class="t" style="top:1302.2px;font-size:36px;color:#222;font-weight:700;left:1852.8px;">Итого:</div>
<div class="t" style="top:1302.2px;font-size:36px;color:#222;font-weight:700;right:160.19999999999982px;">700,00</div>
<div class="t" style="top:1404.0px;font-size:24px;color:#222;left:1852.8px;">Вес: 300</div>
<div class="t" style="top:1404.0px;font-size:24px;color:#222;left:2192.9px;">Объем: 250</div>
<div class="t" style="top:1452.2px;font-size:24px;color:#222;left:1852.8px;">Кол-во: 2</div>
</div>
</body></html>
